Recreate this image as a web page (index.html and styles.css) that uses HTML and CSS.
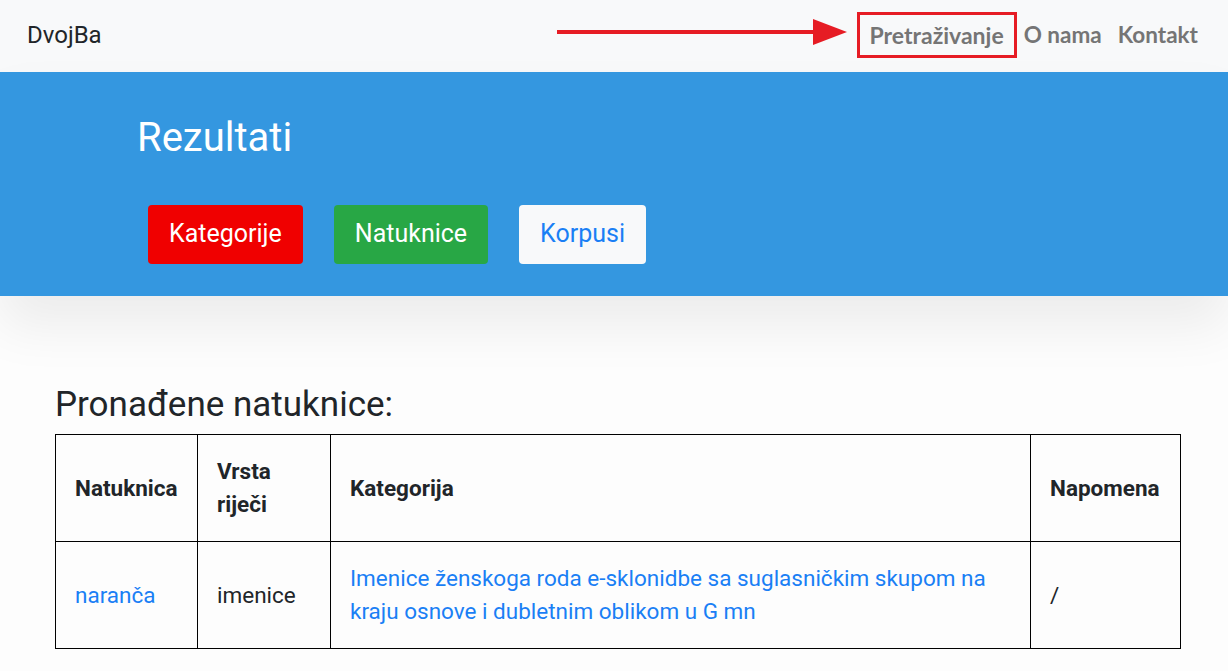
FILE: index.html
```html
<!DOCTYPE html>
<html>
	<head>
		<title>DvojBa - Rezultati</title>
		<link rel="stylesheet" href="styles.css">
	</head>
	<body>
		<nav class="navbar">
			<a class="brand" href="#">DvojBa</a>
			<div class="nav-right">
				<svg class="arrow" width="290" height="28" viewBox="0 0 290 28">
					<rect x="0" y="11" width="262" height="4" fill="#e61c24" />
					<polygon points="256,0 290,13 256,26" fill="#e61c24" />
				</svg>
				<ul class="nav-links">
					<li><a class="nav-link marked" href="#">Pretraživanje</a></li>
					<li><a class="nav-link" href="#">O nama</a></li>
					<li><a class="nav-link" href="#">Kontakt</a></li>
				</ul>
			</div>
		</nav>

		<header class="hero">
			<h1>Rezultati</h1>
			<div class="hero-buttons">
				<a class="btn btn-red" href="#">Kategorije</a>
				<a class="btn btn-green" href="#">Natuknice</a>
				<a class="btn btn-light" href="#">Korpusi</a>
			</div>
		</header>

		<main class="content">
			<h2>Pronađene natuknice:</h2>
			<table class="results">
				<colgroup>
					<col style="width: 142px">
					<col style="width: 133px">
					<col style="width: 700px">
					<col style="width: 150px">
				</colgroup>
				<thead>
					<tr>
						<th>Natuknica</th>
						<th>Vrsta riječi</th>
						<th>Kategorija</th>
						<th>Napomena</th>
					</tr>
				</thead>
				<tbody>
					<tr>
						<td><a href="#">naranča</a></td>
						<td>imenice</td>
						<td><a href="#">Imenice ženskoga roda e-sklonidbe sa suglasničkim skupom na kraju osnove i dubletnim oblikom u G mn</a></td>
						<td>/</td>
					</tr>
				</tbody>
			</table>
		</main>
	</body>
</html>
```

FILE: styles.css
```css
body {
	margin: 0;
	background: #fdfdfd;
	color: #212529;
	font-family: Roboto, "Liberation Sans", Arial, sans-serif;
}

a {
	text-decoration: none;
}

.navbar {
	display: flex;
	align-items: center;
	height: 72px;
	padding: 0 22px 0 27px;
	background: #f8f9fa;
}
.brand {
	color: #212529;
	font-size: 24px;
	margin-top: -2px;
}
.nav-right {
	margin-left: auto;
	display: flex;
	align-items: center;
	margin-top: -2px;
}
.arrow {
	display: block;
	margin-right: 10px;
	margin-top: -4px;
}
.nav-links {
	display: flex;
	align-items: center;
	list-style: none;
	margin: 0;
	padding: 0;
}
.nav-link {
	display: block;
	padding: 6px 8px;
	color: #757575;
	font-family: Lato, "Liberation Sans", sans-serif;
	font-weight: bold;
	font-size: 22.5px;
	line-height: 28px;
}
.nav-link.marked {
	border: 3px solid #e61c24;
	padding: 6px 10px;
	margin-right: -1px;
	font-size: 23px;
}

.hero {
	position: relative;
	z-index: 1;
	background: #3497e0;
	padding: 42px 137px 32px;
	box-shadow: 0 30px 50px rgba(0, 0, 0, 0.07);
}
.hero h1 {
	margin: 0;
	color: #fff;
	font-weight: normal;
	font-size: 40px;
	line-height: 48px;
}
.hero-buttons {
	display: flex;
	gap: 31px;
	margin: 43px 0 0 11px;
}
.btn {
	display: block;
	padding: 11px 21px 12px;
	border-radius: 4px;
	font-size: 25px;
	line-height: 36px;
}
.btn-red {
	background: #f00000;
	color: #fff;
}
.btn-green {
	background: #28a745;
	color: #fff;
}
.btn-light {
	background: #f8f9fa;
	color: #1a7ff5;
}

.content {
	padding: 88px 48px 40px 55px;
}
.content h2 {
	margin: 0 0 8px;
	font-weight: normal;
	font-size: 35px;
	line-height: 42px;
}

.results {
	width: 1125px;
	table-layout: fixed;
	border-collapse: collapse;
	font-size: 22.5px;
	line-height: 33px;
}
.results th,
.results td {
	border: 1.5px solid #000;
	padding: 20px 19px;
	text-align: left;
	vertical-align: middle;
}
.results th {
	font-weight: bold;
	color: #212529;
}
.results a {
	color: #1a7ff5;
}
```
